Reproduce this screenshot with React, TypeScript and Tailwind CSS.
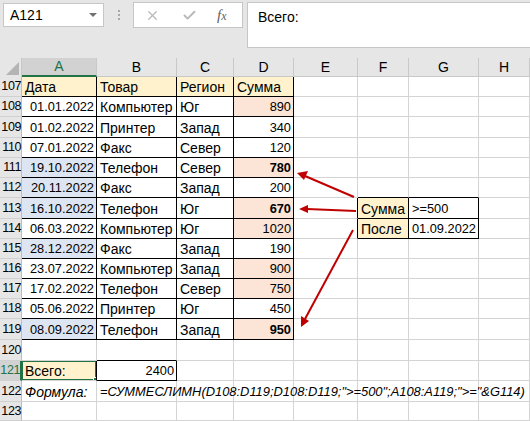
import React from "react";
import { X, Check } from "lucide-react";

const colW = ["w-[75px]", "w-[80px]", "w-[57px]", "w-[60px]", "w-[64px]", "w-[51px]", "w-[70px]", "flex-1"];
const letters = ["A", "B", "C", "D", "E", "F", "G", "H"];
const hCls: Record<number, string> = { 19: "h-[19px]", 20: "h-[20px]", 21: "h-[21px]" };

type Cell = { t?: string; align?: "l" | "r"; bg?: string; bold?: boolean; italic?: boolean; overflow?: boolean; num?: boolean };

const Y = "bg-[#fff2cc]";
const P = "bg-[#fce4d6]";
const B = "bg-[#dde5f2]";

const data: [number, string, string, string, string, boolean, boolean, boolean][] = [
  [108, "01.01.2022", "Компьютер", "Юг", "890", false, true, false],
  [109, "01.02.2022", "Принтер", "Запад", "340", false, false, false],
  [110, "07.01.2022", "Факс", "Север", "120", false, false, false],
  [111, "19.10.2022", "Телефон", "Север", "780", true, true, true],
  [112, "20.11.2022", "Факс", "Запад", "200", true, false, false],
  [113, "16.10.2022", "Телефон", "Юг", "670", true, true, true],
  [114, "06.03.2022", "Компьютер", "Юг", "1020", false, true, false],
  [115, "28.12.2022", "Факс", "Запад", "190", true, false, false],
  [116, "23.07.2022", "Компьютер", "Запад", "900", false, true, false],
  [117, "17.02.2022", "Телефон", "Север", "750", false, true, false],
  [118, "05.06.2022", "Принтер", "Юг", "450", false, false, false],
  [119, "08.09.2022", "Телефон", "Запад", "950", true, true, true],
];

const heights: Record<number, number> = {
  107: 20, 108: 20, 109: 21, 110: 20, 111: 20, 112: 20, 113: 21, 114: 20, 115: 20,
  116: 20, 117: 20, 118: 20, 119: 21, 120: 21, 121: 20, 122: 21, 123: 19,
};

function buildCells(): Record<number, Cell[]> {
  const m: Record<number, Cell[]> = {};
  for (let r = 107; r <= 123; r++) m[r] = Array.from({ length: 8 }, () => ({}));
  m[107][0] = { t: "Дата", bg: Y };
  m[107][1] = { t: "Товар", bg: Y };
  m[107][2] = { t: "Регион", bg: Y };
  m[107][3] = { t: "Сумма", bg: Y };
  for (const [r, d, g, reg, s, blue, pink, bold] of data) {
    m[r][0] = { t: d, align: "r", bg: blue ? B : undefined, num: true };
    m[r][1] = { t: g };
    m[r][2] = { t: reg };
    m[r][3] = { t: s, align: "r", bg: pink ? P : undefined, bold, num: true };
  }
  m[113][5] = { t: "Сумма", bg: Y };
  m[113][6] = { t: ">=500", num: true };
  m[114][5] = { t: "После", bg: Y };
  m[114][6] = { t: "01.09.2022", align: "r", num: true };
  m[121][0] = { t: "Всего:", bg: Y };
  m[121][1] = { t: "2400", align: "r", num: true };
  m[122][0] = { t: "Формула:", italic: true };
  m[122][1] = { t: '=СУММЕСЛИМН(D108:D119;D108:D119;">=500";A108:A119;">="&G114)', italic: true, overflow: true };
  return m;
}

function isBlack(r: number, c: number) {
  if (r >= 107 && r <= 119 && c >= 0 && c <= 3) return true;
  if (r >= 113 && r <= 114 && c >= 5 && c <= 6) return true;
  if (r === 121 && c === 1) return true;
  return false;
}

export default function App() {
  const cells = buildCells();
  const rows = Object.keys(heights).map(Number);
  return (
    <div
      className="relative w-[530px] h-[421px] overflow-hidden bg-[#e6e6e6] text-black"
      style={{ fontFamily: '"Liberation Sans", Arial, sans-serif' }}
    >
      {/* formula bar area */}
      <div className="flex h-[58px] items-start">
        <div className="ml-[3px] mt-[3px] w-[101px] h-[24px] bg-white border border-[#c6c6c6] flex items-center pl-[6px] pr-[6px] text-[14px]">
          <span className="flex-1">A121</span>
          <svg width="8" height="5" viewBox="0 0 8 5"><path d="M0 0 L8 0 L4 4 Z" fill="#707070" /></svg>
        </div>
        <div className="ml-[14px] mt-[10px] flex flex-col gap-[2px]">
          <div className="w-[2px] h-[2px] bg-[#a8a8a8]" />
          <div className="w-[2px] h-[2px] bg-[#a8a8a8]" />
          <div className="w-[2px] h-[2px] bg-[#a8a8a8]" />
        </div>
        <div className="ml-[13px] mt-[2px] w-[110px] h-[26px] bg-white border border-[#c6c6c6] flex items-center">
          <X className="ml-[11px] text-[#b8b8b8]" size={15} strokeWidth={2} />
          <Check className="ml-[22px] text-[#b8b8b8]" size={15} strokeWidth={3} />
          <span className="ml-[20px] text-[15px] italic text-[#606060]" style={{ fontFamily: '"Liberation Serif", serif' }}>
            f<span className="text-[12px]">x</span>
          </span>
        </div>
        <div className="ml-[4px] mt-[2px] flex-1 h-[46px] bg-white border border-[#c6c6c6] border-r-0 pl-[10px] pt-[4px] text-[14px]">
          Всего:
        </div>
      </div>

      {/* column headers */}
      <div className="flex h-[19px]">
        <div className="relative w-[22px] border-r border-[#c8c8c8]">
          <svg className="absolute left-0 top-0" width="22" height="19" viewBox="0 0 22 19">
            <path d="M6 17 L19 17 L19 4 Z" fill="#b4b4b4" />
          </svg>
        </div>
        {letters.map((l, i) => (
          <div
            key={l}
            className={`${colW[i]} flex items-center justify-center text-[14px] border-r ${
              i === 0
                ? "bg-[#d2d2d2] text-[#217346] border-[#c8c8c8] border-b-2 border-b-[#217346]"
                : "border-[#c8c8c8] border-b border-b-[#c8c8c8]"
            }`}
          >
            {l}
          </div>
        ))}
      </div>

      {/* rows */}
      {rows.map((r) => (
        <div key={r} className={`flex ${hCls[heights[r]]}`}>
          <div
            className={`w-[22px] shrink-0 flex items-center justify-end text-[12.5px] tracking-[-0.4px] border-b border-b-[#d0d0d0] ${
              r === 121 ? "bg-[#d2d2d2] text-[#217346] border-r-2 border-r-[#217346]" : "border-r border-r-[#bdbdbd]"
            }`}
          >
            {r}
          </div>
          {cells[r].map((c, i) => {
            const rb = isBlack(r, i) || isBlack(r, i + 1) ? "border-r-black" : "border-r-[#d4d4d4]";
            const bb = isBlack(r, i) || isBlack(r + 1, i) ? "border-b-black" : "border-b-[#d4d4d4]";
            const size = c.overflow ? "text-[12.9px]" : c.num ? "text-[12.8px]" : "text-[14px]";
            return (
              <div
                key={i}
                className={`relative ${colW[i]} shrink-0 border-r border-b ${rb} ${bb} ${c.bg ?? "bg-white"} flex items-end pb-[1px] ${size} leading-[16px] whitespace-nowrap ${
                  c.align === "r" ? "justify-end pr-[2px]" : "justify-start pl-[3px]"
                } ${c.bold ? "font-bold" : ""} ${c.italic ? "italic" : ""} ${c.overflow ? "overflow-visible z-10" : "overflow-hidden"}`}
              >
                <span>{c.t}</span>
                {r === 121 && i === 0 && (
                  <div className="absolute left-[-1px] top-[-1px] right-[-1px] bottom-[-1px] border-2 border-[#217346] pointer-events-none">
                    <div className="absolute right-[-4px] bottom-[-4px] w-[6px] h-[6px] bg-[#217346] border border-white" />
                  </div>
                )}
              </div>
            );
          })}
        </div>
      ))}

      {/* arrows */}
      <svg className="absolute left-0 top-0 pointer-events-none" width="530" height="421" viewBox="0 0 530 421">
        <g stroke="#c00000" strokeWidth="2" fill="#c00000">
          <line x1="354" y1="197" x2="305" y2="176" />
          <path d="M297 173 L308 171 L304 180 Z" stroke="none" />
          <line x1="356" y1="211" x2="307" y2="209" />
          <path d="M299 209 L308 205 L308 213 Z" stroke="none" />
          <line x1="353" y1="230" x2="305" y2="319" />
          <path d="M301 327 L301 316 L309 321 Z" stroke="none" />
        </g>
      </svg>
    </div>
  );
}
